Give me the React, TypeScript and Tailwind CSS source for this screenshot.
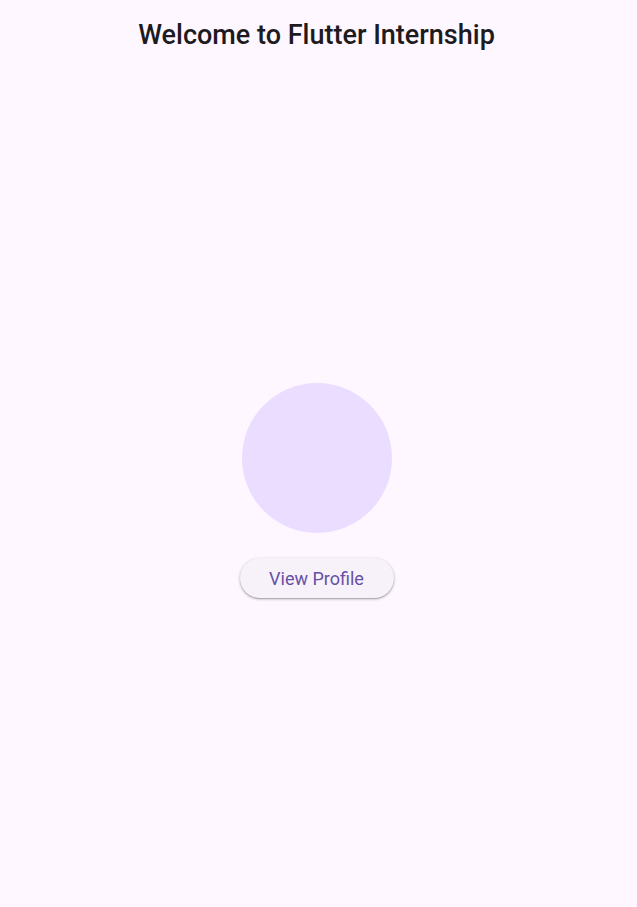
export default function App() {
  return (
    <div className="min-h-screen bg-[#fef7ff] flex flex-col pr-[4px] font-['Roboto',sans-serif]">
      <header className="h-[70px] flex items-center justify-center">
        <h1 className="text-[27px] leading-[34px] text-[#1d1b20] font-medium">Welcome to Flutter Internship</h1>
      </header>
      <main className="flex flex-col items-center pt-[313px]">
        <div className="w-[150px] h-[150px] rounded-full bg-[#eaddff]" />
        <button className="mt-[25px] h-[40px] w-[154px] rounded-full bg-[#f7f2fa] text-[#6750a4] text-[18px] shadow-[0_1px_3px_rgba(0,0,0,0.3),0_1px_1px_rgba(0,0,0,0.15)]">
          View Profile
        </button>
      </main>
    </div>
  );
}
